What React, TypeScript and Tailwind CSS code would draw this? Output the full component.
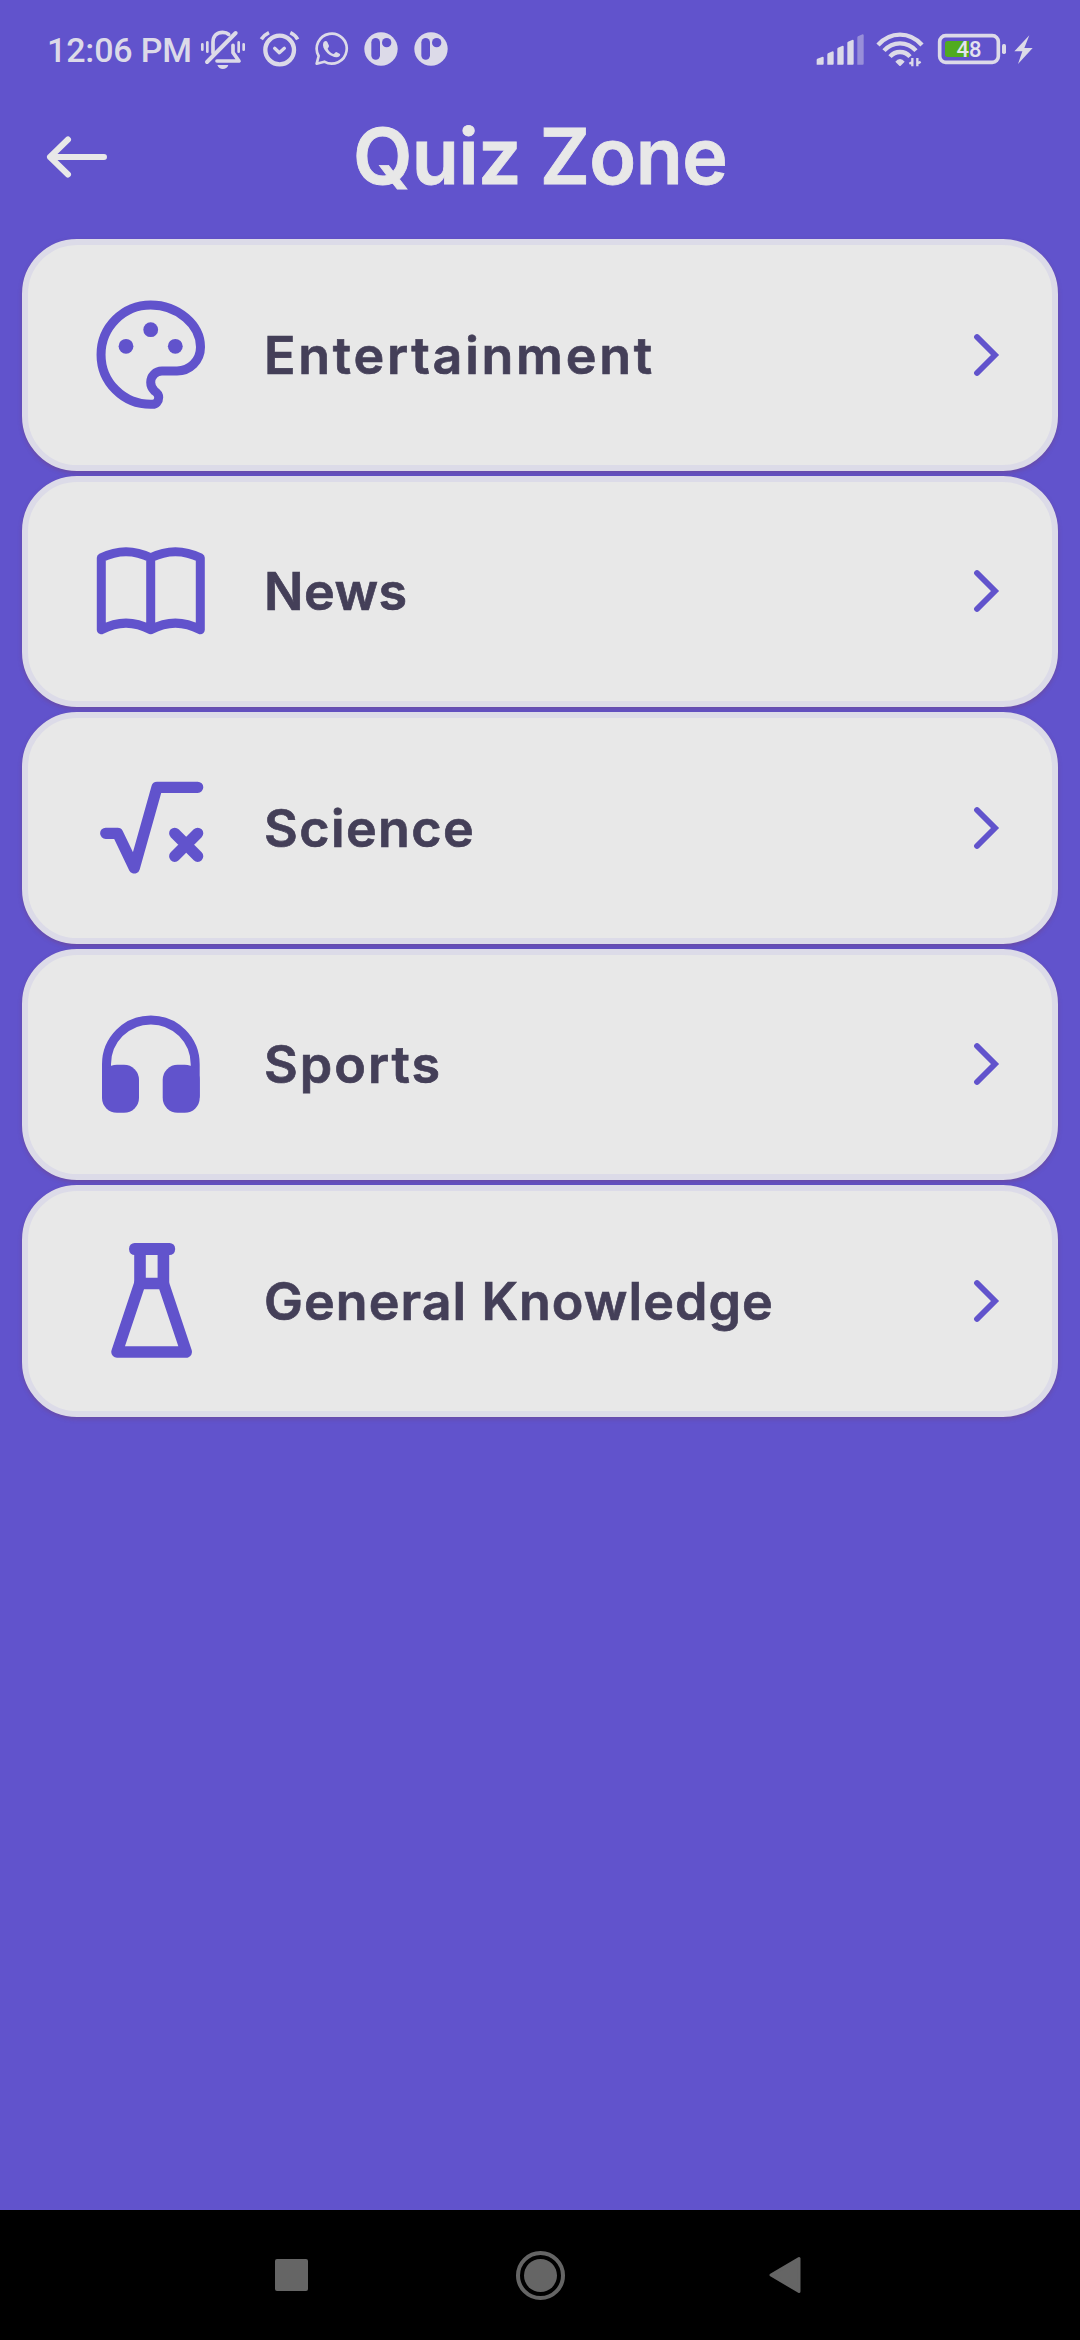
import type { ReactNode } from "react";

const PURPLE = "#6153cc";

function StatusIcon({ box, className, children }: { box: string; className: string; children: ReactNode }) {
  return (
    <svg viewBox={box} className={"h-11 shrink-0 " + className} fill="none" stroke="#dcdae8" strokeLinecap="round" strokeLinejoin="round">
      {children}
    </svg>
  );
}

function BeanBadge({ className }: { className: string }) {
  return (
    <StatusIcon box="516 24 108 132" className={"w-9 " + className}>
      <circle cx="570" cy="87" r="50" fill="#dcdae8" stroke="none" />
      <rect x="541" y="54" width="26" height="65" rx="13" fill={PURPLE} stroke="none" />
      <circle cx="587" cy="68" r="14" fill={PURPLE} stroke="none" />
    </StatusIcon>
  );
}

function StatusBar() {
  return (
    <div className="flex h-[100px] items-center justify-between pl-[47px] pr-[46px]">
      <div className="flex items-center">
        <span className="w-[151px] whitespace-nowrap font-[Roboto] text-[34px] leading-none font-medium tracking-[-0.15px] text-[#dcdae8]">12:06 PM</span>
        <StatusIcon box="24 24 144 132" className="ml-px w-12">
          <path d="M66 98V66C66 47 78 37 95 37C103 37 109 39 113 43" strokeWidth="11" />
          <path d="M48 126L134 39" strokeWidth="12" />
          <path d="M126 76V98L144 123H78" strokeWidth="11" />
          <path d="M79 135H112C110 143 103 147 95.500 147S82 143 79 135Z" fill="#dcdae8" stroke="none" />
          <path d="M34 73V89M49 67V95M143 67V95M158 73V89" strokeWidth="8" />
        </StatusIcon>
        <StatusIcon box="201 24 132 132" className="ml-[11px] w-11">
          <circle cx="266" cy="90" r="43" strokeWidth="13" />
          <path d="M251 85L265 98L280 85" strokeWidth="10" />
          <path d="M211 58Q219 45 234 38M298 38Q313 45 320 58" strokeWidth="11" strokeLinecap="butt" />
        </StatusIcon>
        <StatusIcon box="366 24 108 132" className="ml-[11px] w-9">
          <path d="M377 131L383 108A45 45 0 1 1 400 125Z" strokeWidth="8" />
          <path
            d="M399 65C402 62 407 62 409 66L414 77C415 80 410 84 410 86C413 93 420 99 427 102C430 102 433 96 436 96L447 102C449 107 443 112 436 112C420 111 397 94 396 76C396 71 397 67 399 65Z"
            fill="#dcdae8"
            stroke="none"
          />
        </StatusIcon>
        <BeanBadge className="ml-[14px]" />
        <BeanBadge className="ml-[14px]" />
      </div>
      <div className="flex items-center">
        <StatusIcon box="45 24 150 132" className="w-[50px]">
          <g fill="#dcdae8" stroke="none">
            <path d="M50 134V120Q50 117 52 116L68 110Q71 110 71 113V131Q71 134 68 134Z" />
            <path d="M82 134V104Q82 101 84 100L98 94Q101 94 101 97V131Q101 134 98 134Z" />
            <path d="M112 134V87Q112 84 114 83L128 77Q131 77 131 80V131Q131 134 128 134Z" />
            <path d="M142 134V69Q142 66 144 65L158 59Q161 59 161 62V131Q161 134 158 134Z" />
            <path d="M172 134V53Q172 50 174 49L188 43Q191 43 191 46V131Q191 134 188 134Z" opacity=".45" />
          </g>
        </StatusIcon>
        <StatusIcon box="228 24 144 132" className="ml-[11px] w-12">
          <g strokeWidth="13" strokeLinecap="butt">
            <path d="M234 75Q262 44 300 44T366 75" />
            <path d="M252 92Q272 70 300 70T348 92" />
            <path d="M270 110Q282 96 300 96T330 110" />
          </g>
          <path d="M286 125Q292 117 300 117T314 125L302 137Q300 139 298 137Z" fill="#dcdae8" stroke="none" />
          <path d="M328 131L337 126V114M337 114V139M352 139V114M352 131L362 125" strokeWidth="7" strokeLinecap="butt" />
        </StatusIcon>
        <div className="relative ml-[13px] flex">
          <StatusIcon box="411 24 210 132" className="w-[70px]">
            <rect x="419" y="47" width="176" height="80" rx="18" strokeWidth="11" />
            <path d="M443 63H507V111H443Q435 111 435 103V71Q435 63 443 63Z" fill="#50ab20" stroke="none" />
            <rect x="606" y="72" width="12" height="30" rx="5" fill="#dcdae8" stroke="none" />
          </StatusIcon>
          <span className="absolute inset-y-0 left-0 flex w-[64px] items-center justify-center font-[Roboto] text-[22px] leading-none font-medium text-[#e4e2ee]">48</span>
        </div>
        <StatusIcon box="639 24 63 132" className="ml-[6px] w-[21px]">
          <path d="M688 46L643 94H667L654 132L698 84H673Z" fill="#dcdae8" stroke="none" />
        </StatusIcon>
      </div>
    </div>
  );
}

const paletteIcon = (
  <>
    <path
      d="M59.700 10C87 10 109.500 30 109.500 52C109.500 66 98.500 76 86 76H71C64.500 76 59.700 81 59.700 87.300C59.700 90.500 61 93.500 63.500 96C66 97.500 67.700 99.500 67.700 102.500C67.700 106.500 65 109.300 61.500 109.300H59.700A49.600 49.600 0 0 1 59.700 10Z"
      strokeWidth="9"
    />
    <g fill={PURPLE} stroke="none">
      <circle cx="35" cy="51.300" r="7.400" />
      <circle cx="59.700" cy="34.700" r="7.400" />
      <circle cx="84.300" cy="51.300" r="7.400" />
    </g>
  </>
);

const bookIcon = (
  <path
    d="M10.300 26.800Q35 14.600 59.700 26.800Q84.300 14.600 109.300 26.800V98.800Q84.300 85.500 59.700 98.800Q35 85.500 10.300 98.800ZM59.700 26.800V98.800"
    strokeWidth="9"
  />
);

const rootIcon = <path d="M14.700 65.300H26.700L43.300 100L66 19.300H106.700M83.700 65.300L106.700 88.300M106.700 65.300L83.700 88.300" strokeWidth="11.200" />;

const headphonesIcon = (
  <>
    <path d="M15.500 92V60.300A44.350 44.350 0 0 1 104.200 60.300V92" strokeWidth="9" />
    <rect x="11" y="60.800" width="37" height="48" rx="15" fill={PURPLE} stroke="none" />
    <rect x="71.700" y="60.800" width="37" height="48" rx="15" fill={PURPLE} stroke="none" />
  </>
);

const flaskIcon = (
  <>
    <rect x="38.100" y="2" width="46" height="12" rx="5.500" fill={PURPLE} stroke="none" />
    <path d="M49 10V42.600M72.400 10V42.600" strokeWidth="11.600" strokeLinecap="butt" />
    <path d="M48.800 42.600H72.400L95.300 111H26Z" strokeWidth="11.500" />
  </>
);

const categories = [
  { name: "Entertainment", icon: paletteIcon, tracking: "tracking-[2.75px]" },
  { name: "News", icon: bookIcon, tracking: "tracking-[0.5px]" },
  { name: "Science", icon: rootIcon, tracking: "tracking-[1.4px]" },
  { name: "Sports", icon: headphonesIcon, tracking: "tracking-[2px]" },
  { name: "General Knowledge", icon: flaskIcon, tracking: "tracking-[1.050px]" },
];

export default function App() {
  return (
    <div className="flex h-[2340px] w-[1080px] flex-col bg-[#6153cc]">
      <StatusBar />
      <header className="grid h-[139.250px] shrink-0 grid-cols-[1fr_auto_1fr] items-start">
        <svg viewBox="0 0 70 50" className="mt-8 ml-[42px] h-[50px] w-[70px]" fill="none" stroke="#e8e8e8" strokeWidth="6" strokeLinecap="round" strokeLinejoin="round">
          <path d="M62 25H8M26 7.500L8 25L26 42.500" />
        </svg>
        <h1 className="mt-[12px] whitespace-nowrap font-[Inter] text-[77px] leading-[88px] font-semibold tracking-[-0.6px] text-[#e8e8e8] [-webkit-text-stroke:0.8px_#e8e8e8]">
          Quiz Zone
        </h1>
      </header>
      <main className="flex flex-1 flex-col gap-[5.250px] px-[22px]">
        {categories.map((c) => (
          <button
            key={c.name}
            className="flex h-[231.250px] shrink-0 items-center rounded-[55px] border-6 border-[#dcdbe8] bg-[#e8e8e8] pl-[63px] pr-[46px] text-left shadow-[0_2px_4px_rgba(120,60,90,0.35)]"
          >
            <svg viewBox="0 0 120 120" className="h-[120px] w-[120px] shrink-0" fill="none" stroke={PURPLE} strokeLinecap="round" strokeLinejoin="round">
              {c.icon}
            </svg>
            <span
              className={
                "mt-[2px] ml-[53px] flex-1 whitespace-nowrap font-[Inter] text-[52px] leading-[60px] font-semibold text-[#443f58] [-webkit-text-stroke:0.7px_#443f58] " + c.tracking
              }
            >
              {c.name}
            </span>
            <svg viewBox="0 0 40 50" className="h-[50px] w-10 shrink-0" fill="none" stroke={PURPLE} strokeWidth="5.800" strokeLinecap="round" strokeLinejoin="miter">
              <path d="M11 7L29 25L11 43" />
            </svg>
          </button>
        ))}
      </main>
      <nav className="flex h-[130px] shrink-0 items-center bg-black pl-[275px]">
        <span className="h-8 w-[33px] rounded-[2px] bg-[#656565]" />
        <span className="ml-[208px] flex h-[49px] w-[49px] items-center justify-center rounded-full border-4 border-[#656565]">
          <span className="h-[33px] w-[33px] rounded-full bg-[#656565]" />
        </span>
        <svg viewBox="0 0 36 40" className="ml-[202px] h-10 w-9" fill="#656565" stroke="#656565" strokeWidth="3" strokeLinejoin="round">
          <path d="M4 20L32 3.500V36.500Z" />
        </svg>
      </nav>
    </div>
  );
}
